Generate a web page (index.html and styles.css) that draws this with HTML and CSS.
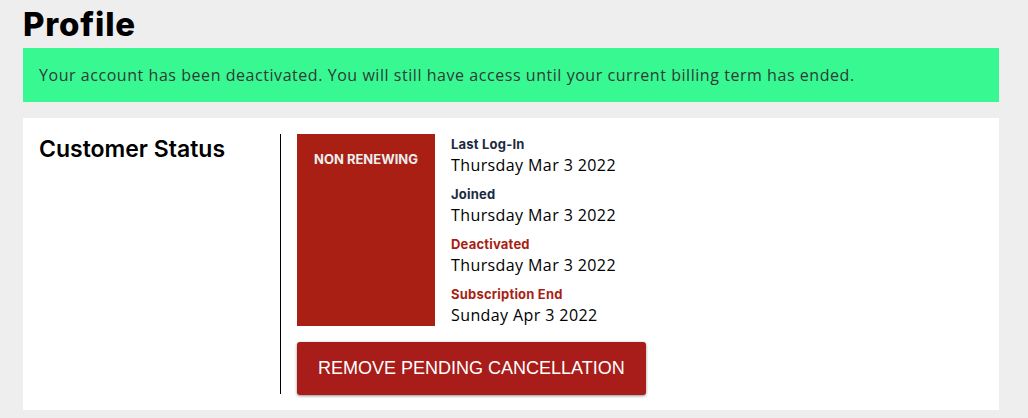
FILE: index.html
```html
<!DOCTYPE html>
<html lang="en">
<head>
<meta charset="utf-8">
<title>Profile</title>
<link rel="stylesheet" href="styles.css">
</head>
<body>
<main class="page">
  <h1 class="page-title">Profile</h1>
  <div class="alert">Your account has been deactivated. You will still have access until your current billing term has ended.</div>
  <section class="card">
    <div class="card-side">
      <h2 class="card-title">Customer Status</h2>
    </div>
    <div class="card-body">
      <div class="status-row">
        <div class="status-badge">NON RENEWING</div>
        <dl class="details">
          <div class="detail">
            <dt class="detail-label">Last Log-In</dt>
            <dd class="detail-value">Thursday Mar 3 2022</dd>
          </div>
          <div class="detail">
            <dt class="detail-label">Joined</dt>
            <dd class="detail-value">Thursday Mar 3 2022</dd>
          </div>
          <div class="detail">
            <dt class="detail-label detail-label--alert">Deactivated</dt>
            <dd class="detail-value">Thursday Mar 3 2022</dd>
          </div>
          <div class="detail">
            <dt class="detail-label detail-label--alert">Subscription End</dt>
            <dd class="detail-value">Sunday Apr 3 2022</dd>
          </div>
        </dl>
      </div>
      <button class="btn-danger" type="button">REMOVE PENDING CANCELLATION</button>
    </div>
  </section>
</main>
</body>
</html>
```
FILE: styles.css
```css
* { box-sizing: border-box; }
html, body { margin: 0; padding: 0; }
body {
  background: #eeeeee;
  font-family: "Open Sans", "Liberation Sans", sans-serif;
  color: #000;
}
.page {
  padding: 0 29px 0 23px;
}
.page-title {
  margin: 0;
  font-family: Inter, "Liberation Sans", sans-serif;
  font-weight: 800;
  font-size: 33px;
  line-height: 48px;
  letter-spacing: 0.8px;
}
.alert {
  height: 54px;
  display: flex;
  align-items: center;
  padding: 0 16px;
  background: #38f892;
  color: #2f3b36;
  font-size: 16px;
  letter-spacing: 0.55px;
}
.card {
  margin-top: 16px;
  background: #fff;
  padding: 16px;
  display: flex;
  height: 292px;
}
.card-side {
  width: 242px;
  border-right: 1px solid #000;
  flex-shrink: 0;
}
.card-title {
  margin: 0;
  font-family: Inter, "Liberation Sans", sans-serif;
  font-weight: 600;
  font-size: 23px;
  line-height: 30px;
}
.card-body {
  padding-left: 16px;
  display: flex;
  flex-direction: column;
  gap: 16px;
}
.status-row {
  display: flex;
  gap: 16px;
  height: 192px;
  flex-shrink: 0;
}
.status-badge {
  width: 138px;
  height: 192px;
  background: #a91f14;
  color: #eeeeee;
  font-family: Inter, "Liberation Sans", sans-serif;
  font-weight: 700;
  font-size: 13px;
  line-height: 16px;
  text-align: center;
  padding-top: 17px;
}
.details {
  margin: 0;
  padding-top: 1px;
}
.detail {
  margin-bottom: 8px;
}
.detail:last-child {
  margin-bottom: 0;
}
.detail-label {
  font-family: Inter, "Liberation Sans", sans-serif;
  font-weight: 700;
  font-size: 13px;
  line-height: 18px;
  letter-spacing: 0.2px;
  color: #1b2a3f;
}
.detail-label--alert {
  color: #a91f14;
}
.detail-value {
  margin: 0;
  font-size: 16px;
  line-height: 24px;
  letter-spacing: 0.4px;
  color: #000;
}
.btn-danger {
  align-self: flex-start;
  flex-shrink: 0;
  height: 53px;
  padding: 0 21px;
  border: 0;
  border-radius: 3px;
  background: #a81c1a;
  color: #fff;
  font-family: "Liberation Sans", Arial, sans-serif;
  font-size: 18px;
  box-shadow: 0 1px 3px rgba(0, 0, 0, 0.45);
  cursor: pointer;
}
```
